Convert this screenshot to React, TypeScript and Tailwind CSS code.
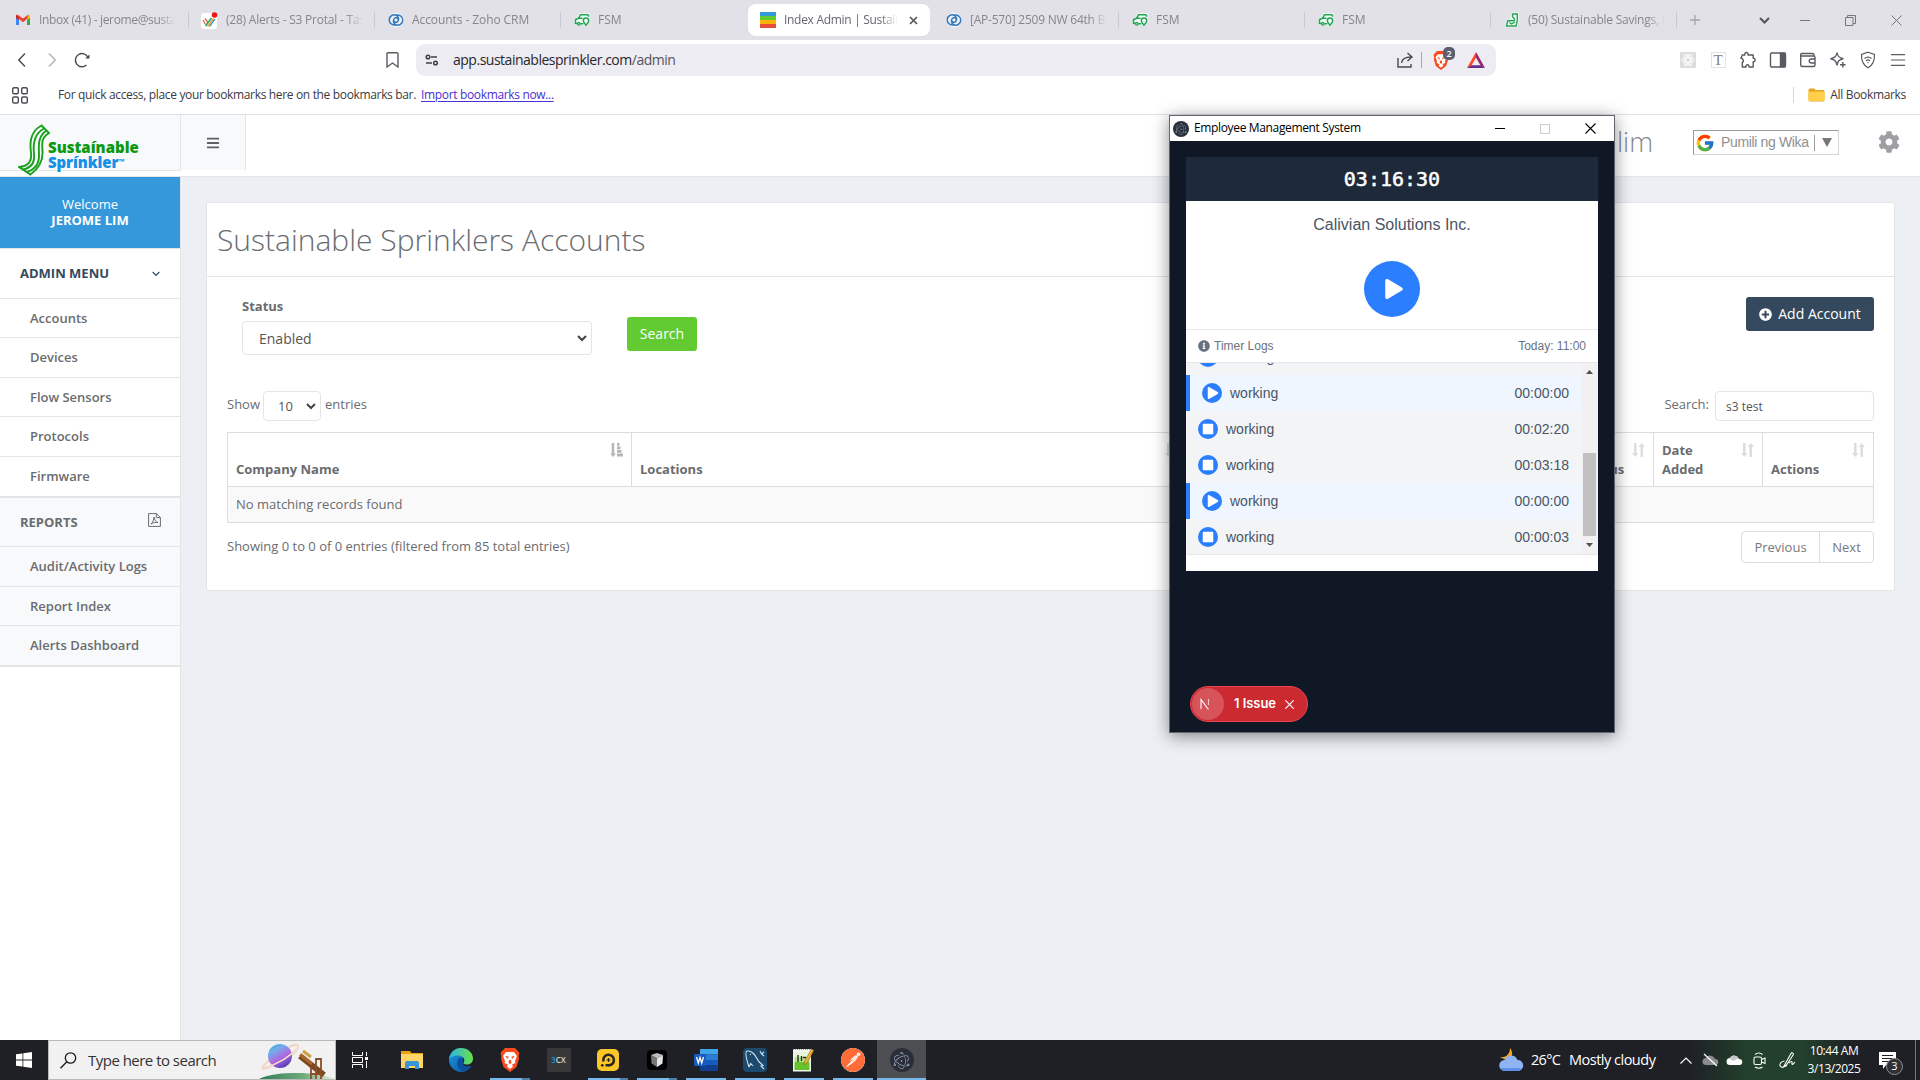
import React from "react";
import { FaBars, FaCog, FaPlusCircle, FaInfoCircle, FaPlay, FaStop } from "react-icons/fa";
import { FcGoogle } from "react-icons/fc";
import { SiPostman, SiElectron } from "react-icons/si";

const GmailIcon = () => (
  <svg width="16" height="16" viewBox="0 0 16 16">
    <path d="M1 4v9h3V7z" fill="#4285f4" />
    <path d="M15 4v9h-3V7z" fill="#34a853" />
    <path d="M12 4.500 15 2.500v3.500L12 8z" fill="#fbbc04" />
    <path d="M1 2.500 4 4.500V8L1 6z" fill="#c5221f" />
    <path d="M2.500 2.500 8 6.500l5.500-4L12 7 8 10.300 4 7z" fill="#ea4335" />
  </svg>
);
const AlertsIcon = () => (
  <svg width="17" height="17" viewBox="0 0 17 17">
    <rect y="1" width="16" height="16" rx="3" fill="#fff" />
    <path d="M2 8l2.500 4.500M4 6.500l3 4" stroke="#e5684d" strokeWidth="1.300" />
    <path d="M4.500 14 10.500 6" stroke="#27a567" strokeWidth="1.500" />
    <path d="M6.500 14.500 12.500 6.500" stroke="#f0a030" strokeWidth="1.300" />
    <path d="M8.500 14.500 14 7" stroke="#3c9bb9" strokeWidth="1.300" />
    <circle cx="13.500" cy="3" r="2.800" fill="#f01414" />
  </svg>
);
const ZohoIcon = () => (
  <svg width="16" height="16" viewBox="0 0 16 16" fill="none" stroke="#3478b9" strokeWidth="1.500">
    <circle cx="8" cy="8" r="7.500" fill="#eef3f8" stroke="none" />
    <path d="M8.500 12.300A5 5 0 1 1 8.700 3.500c2.200 1.800 2.500 4.500.8 6.200-1.300 1.300-3.800.5-3.800-1.500" />
    <path d="M7.500 3.700a5 5 0 1 1-.2 8.800C5.100 10.700 4.800 8 6.500 6.300c1.300-1.300 3.800-.5 3.800 1.500" />
  </svg>
);
const FsmIcon = () => (
  <svg width="16" height="16" viewBox="0 0 16 16" fill="none">
    <g id="fsm">
      <path d="M14.800 2.500H6.300L4.300 6.200 1.500 7.500v4h7.500l3.500 1.500 2-5z" fill="#f4faf6" stroke="#f4faf6" strokeWidth="2.500" />
      <path d="M14.500 2.700H6.500L4.500 6.300 1.500 7.500v4h1.800M6.300 11.700h3M4.700 6.300h3.800" stroke="#23a455" strokeWidth="1.600" />
      <circle cx="4.800" cy="11.800" r="1.300" stroke="#23a455" strokeWidth="1.300" />
      <path d="M14.500 2.700v2M12 13.300c-1.700-2-2.700-3.300-2.700-4.600a2.700 2.700 0 0 1 5.400 0c0 1.300-1 2.600-2.700 4.600z" stroke="#23a455" strokeWidth="1.500" />
    </g>
  </svg>
);
const SavingsIcon = () => (
  <svg width="16" height="16" viewBox="0 0 16 16" fill="none">
    <path d="M8 1.800h5.500V9l-1.300 5H2.500l1-5 4-1z" fill="#f4faf6" stroke="#f4faf6" strokeWidth="2.500" />
    <path d="M8.500 5V2h4.800v6.500L12 14H2.500l1.200-5.200H6M8.500 5l1.800 1.500c.8 1.300-.2 2.500-1.600 2.300L6 8.500M5.500 10.500l2 1.500 3.500-2" stroke="#23a455" strokeWidth="1.400" />
  </svg>
);
const IndexIcon = () => (
  <div className="flex h-4 w-4 flex-col">
    <i className="h-1 bg-[#3498db]" />
    <i className="h-1 bg-[#62cb31]" />
    <i className="h-1 bg-[#ffb606]" />
    <i className="h-1 bg-[#e74c3c]" />
  </div>
);

const tabs = [
  { icon: <GmailIcon />, t: "Inbox (41) - jerome@sustainable", c: "tracking-[-0.35px]" },
  { icon: <AlertsIcon />, t: "(28) Alerts - S3 Protal - Task list", c: "tracking-[-0.22px]" },
  { icon: <ZohoIcon />, t: "Accounts - Zoho CRM", c: "tracking-[-0.08px]" },
  { icon: <FsmIcon />, t: "FSM", last: true, c: "" },
  { icon: <IndexIcon />, t: "Index Admin | Sustainable", active: true, c: "tracking-[-0.3px]" },
  { icon: <ZohoIcon />, t: "[AP-570] 2509 NW 64th Boca", c: "tracking-[-0.22px]" },
  { icon: <FsmIcon />, t: "FSM", c: "" },
  { icon: <FsmIcon />, t: "FSM", c: "" },
  { icon: <SavingsIcon />, t: "(50) Sustainable Savings, LLC", c: "tracking-[-0.24px]" },
];

function TabStrip() {
  return (
    <div className="flex h-10 items-center bg-[#e2e1e7] pl-[3px] text-xs text-[#86858d]">
      {tabs.map((tab, i) =>
        tab.active ? (
          <div key={i} className="mr-[3px] ml-px flex h-8 w-[182px] shrink-0 items-center rounded-lg bg-white pl-3 text-[#68676f]">
            {tab.icon}
            <span className={"ml-2 w-[114px] overflow-hidden whitespace-nowrap [mask-image:linear-gradient(to_right,#000_85%,transparent)] " + tab.c}>{tab.t}</span>
            <svg className="ml-[11px]" width="9" height="9" viewBox="0 0 9 9" stroke="#55545b" strokeWidth="1.700"><path d="M1 1l7 7M8 1 1 8" /></svg>
          </div>
        ) : (
          <div key={i} className={"flex h-8 w-[186px] shrink-0 items-center " + (i > 1 ? "pl-[13px]" : "pl-3")}>
            {tab.icon}
            <span className={"ml-2 w-[137px] overflow-hidden whitespace-nowrap [mask-image:linear-gradient(to_right,#000_87%,transparent)] " + tab.c}>{tab.t}</span>
            {!tab.last && <i className="ml-auto h-4 w-px bg-[#c9c8cf]" />}
          </div>
        )
      )}
      <svg className="ml-[13px]" width="10" height="10" viewBox="0 0 10 10" stroke="#a3a2aa" strokeWidth="1.300"><path d="M5 0v10M0 5h10" /></svg>
      <div className="ml-auto flex text-[#77767e]">
        <div className="flex w-[45px] justify-center"><svg width="11" height="11" viewBox="0 0 11 11" fill="none" stroke="#55545b" strokeWidth="2"><path d="M1 3l4.500 4.500L10 3" /></svg></div>
        <div className="flex w-[35px] items-center justify-center"><i className="h-px w-2.5 bg-[#77767e]" /></div>
        <div className="flex w-[57px] justify-center"><svg width="11" height="11" viewBox="0 0 11 11" fill="none" stroke="currentColor"><path d="M.5 2.500h7.500v8H.5zM2.500 2.500v-2h8v8H8" /></svg></div>
        <div className="flex w-[35px] justify-center"><svg width="11" height="11" viewBox="0 0 11 11" fill="none" stroke="currentColor"><path d="M.5.5l10 10M10.500.5l-10 10" /></svg></div>
        <i className="w-[6px]" />
      </div>
    </div>
  );
}

const Svg = ({ children, s = 18 }: { children: React.ReactNode; s?: number }) => (
  <svg width={s} height={s} viewBox="0 0 18 18" fill="none" stroke="#5b5a62" strokeWidth="1.400">{children}</svg>
);

const Lion = ({ w, h }: { w: number; h: number }) => (
  <svg width={w} height={h} viewBox="0 0 20 24">
    <path d="M5 0h10l2.500 2.500L19.500 5l-.8 3 .3 3-2.500 8L10 24l-6.500-5L1 11l.3-3L.5 5l2-2.500z" fill="#fb4a1e" />
    <path d="M6 4h8l3 4-2 5 .5 2-3.500 1.500 1 2-3 2.500-3-2.500 1-2L4.500 15l.5-2-2-5z" fill="#fff" />
    <path d="M5 8l3.500.5L8 11zM15 8l-3.500.5L12 11zM9 12h2l.5 3-1.500 1-1.500-1z" fill="#fb4a1e" />
  </svg>
);

function Toolbar() {
  const ext = [
    <svg width="16" height="16" viewBox="0 0 16 16" fill="none" stroke="#fff"><rect width="16" height="16" fill="#dcdcde" stroke="none" /><ellipse cx="8" cy="8" rx="6" ry="2.400" /><ellipse cx="8" cy="8" rx="6" ry="2.400" transform="rotate(60 8 8)" /><ellipse cx="8" cy="8" rx="6" ry="2.400" transform="rotate(120 8 8)" /></svg>,
    <span className="flex h-4 w-[15px] items-center justify-center border border-[#e3e3e5] font-['Liberation_Serif',serif] text-[15px] leading-none text-[#7f7f84]">T</span>,
    <svg width="18" height="18" viewBox="0 0 18 18" fill="none" stroke="#5b5a62" strokeWidth="1.400"><path d="M3.300 4h2.500C5 .7 9.800.7 9 4h5.200v3.300c2.500-.6 2.500 4 0 3.400V16H10c.6-3-3.600-3-3 0H3.300v-4.500c2.500-1.500 0-4.500-1.300-4.200z" strokeLinejoin="round" /></svg>,
    <Svg><rect x="1.500" y="2" width="15" height="14" rx="1.200" /><path d="M11.500 2.500H16v13h-4.500z" fill="#5b5a62" /></Svg>,
    <Svg><path d="M15 5.500V4c0-1-.6-1.500-1.500-1.500h-11C1.500 2.500 1.500 5 2.500 5h12c1 0 1.500.6 1.500 1.500V14c0 1-.6 1.500-1.500 1.500h-11C2.500 15.500 1.700 15 1.700 14V3.500M16 8h-3.500C9.500 8 9.500 12 12.500 12H16" /></Svg>,
    <Svg><path d="M8 1.500c.6 4 2 5.500 6.300 6.300C10 8.700 8.600 10 8 14.500 7.300 10 6 8.700 1.500 7.800 6 7 7.300 5.500 8 1.500zM13.800 11v5.500M11 13.800h5.600" /></Svg>,
    <Svg><path d="M9 1.200 15.500 3.500c.3 6-1.500 10.500-6.500 13.300C4 14 2.200 9.500 2.500 3.500zM5.500 7.500c2-1.700 5-1.700 7 0M7 9.700c1.200-1 2.800-1 4 0M8.500 11.700h1" strokeWidth="1.200" /></Svg>,
    <Svg s={16}><path d="M1 3h16M1 9h16M1 15h16" /></Svg>,
  ];
  return (
    <div className="flex h-10 items-center bg-white">
      <svg className="ml-[18px]" width="8" height="14" viewBox="0 0 8 14" fill="none" stroke="#4b4a52" strokeWidth="1.400"><path d="M7 .5.8 7 7 13.500" /></svg>
      <svg className="ml-[22px]" width="8" height="14" viewBox="0 0 8 14" fill="none" stroke="#b5b4ba" strokeWidth="1.400"><path d="M1 .5 7.200 7 1 13.500" /></svg>
      <svg className="ml-[18px]" width="17" height="16" viewBox="0 0 17 16" fill="none" stroke="#4b4a52" strokeWidth="1.400"><path d="M12.500 13A6.600 6.600 0 1 1 14 5.500" /><path d="M15.500 2.500v4h-4.300z" fill="#4b4a52" stroke="none" /></svg>
      <svg className="ml-[295px]" width="13" height="16" viewBox="0 0 13 16" fill="none" stroke="#5b5a62" strokeWidth="1.400"><path d="M1 2q0-1.200 1.200-1.200h8.600Q12 .8 12 2v13l-5.500-4L1 15z" /></svg>
      <div className="ml-[17px] flex h-8 w-[1080px] items-center rounded-[9px] bg-[#edecf2]">
        <svg className="ml-[9px]" width="14" height="12" viewBox="0 0 14 12" fill="none" stroke="#3f3e46" strokeWidth="1.500"><circle cx="3" cy="3" r="1.800" /><path d="M6 3h6M1 9h6" /><circle cx="10.500" cy="9" r="1.800" /></svg>
        <span className="mb-px ml-[14px] text-[14px] tracking-[-0.49px] text-[#28272e]">app.sustainablesprinkler.com<span className="text-[#55545b]">/admin</span></span>
        <svg className="ml-auto" width="17" height="16" viewBox="0 0 17 16" fill="none" stroke="#4b4a52" strokeWidth="1.400"><path d="M1 6v9h13v-3M4.500 11c.5-4 3-6 9.500-6M10.500 1l4.500 4-4.500 4" /></svg>
        <i className="ml-[7px] h-4 w-px bg-[#aaa9b0]" />
        <div className="relative ml-[11px] flex h-5 w-4 items-center">
          <Lion w={16} h={19} />
          <span className="absolute -top-[3px] left-[10px] flex h-[13px] w-3 items-center justify-center rounded-[5px] bg-[#5b5e70] text-[9px] font-semibold text-white">2</span>
        </div>
        <svg className="mr-[11px] ml-[18px]" width="18" height="16" viewBox="0 0 18 16"><path d="M9 0 0 16l4.500-2.500L9 5.500z" fill="#ff4724" /><path d="M9 0l9 16-4.500-2.500L9 5.500z" fill="#9e1f63" /><path d="M0 16h18l-4.500-2.700h-9z" fill="#662d91" /></svg>
      </div>
      <div className="ml-auto flex pr-[7px]">
        {ext.map((e, i) => <div key={i} className="flex w-[30px] items-center justify-center">{e}</div>)}
      </div>
    </div>
  );
}

function BookmarksBar() {
  return (
    <div className="flex h-[35px] items-center border-b border-[#dfe0e4] bg-white pb-1 text-xs text-[#3b3a42]">
      <svg className="ml-3" width="16" height="17" viewBox="0 0 16 17" fill="none" stroke="#4b4a52" strokeWidth="1.400"><rect x=".7" y=".7" width="5.600" height="6" rx="1.300" /><rect x="9.700" y=".7" width="5.600" height="6" rx="1.300" /><rect x=".7" y="10" width="5.600" height="6" rx="1.300" /><rect x="9.700" y="10" width="5.600" height="6" rx="1.300" /></svg>
      <span className="ml-[30px] tracking-[-0.34px]">For quick access, place your bookmarks here on the bookmarks bar.</span>
      <span className="ml-[5px] tracking-[-0.34px] text-[#4a31d6] underline underline-offset-2">Import bookmarks now...</span>
      <i className="ml-auto h-4 w-px bg-[#d5d4da]" />
      <svg className="ml-[14px]" width="17" height="14" viewBox="0 0 17 14"><path d="M.5 2q0-1.500 1.500-1.500h4L7.500 2H15q1.500 0 1.500 1.500v8.500q0 1.500-1.500 1.500H2Q.5 13.500.5 12z" fill="#e3a51c" /><path d="M.5 4.500q0-1 1-1h14q1 0 1 1V12q0 1-1 1h-14q-1 0-1-1z" fill="#ffcf48" /></svg>
      <span className="mr-[14px] ml-[5px] tracking-[-0.33px]">All Bookmarks</span>
    </div>
  );
}

function Logo() {
  return (
    <div className="flex h-[62px] w-[180px] pl-[18px]">
      <svg className="mt-[9px] shrink-0" width="33" height="52" viewBox="0 0 33 52" fill="none" stroke="#18a01b" strokeWidth="1.900">
        <path d="M1 43c10-1 13-6 12-14S11 8 23.500 1.500L31 9c-8 5-7 10-6.500 18S23 43 12.500 50.500z" />
        <path d="M5 45.500c9-2 12-7 11-15.500S15.500 10 26 4.500M9 48c9-3 12.500-9 12-18S20 12 28.500 6.500" />
      </svg>
      <div className="mt-[25px] -ml-[3px] text-[15px] leading-[15px] font-extrabold">
        <div className="text-[#0b9a10]">Sustaínable</div>
        <div className="tracking-[-0.1px] text-[#168fe4]">Sprínkler<sup className="-top-1 text-[7px]">™</sup></div>
      </div>
    </div>
  );
}

function Sidebar() {
  const item = "flex items-center border-b border-[#e4e5e7] pl-[30px] font-semibold";
  return (
    <aside className="flex w-[181px] shrink-0 flex-col border-r border-[#e4e5e7] bg-white text-[13px] text-[#6a6c6f]">
      <div className="flex h-[71px] flex-col items-center justify-center bg-[#3498db] pb-px leading-4 text-white">
        <span>Welcome</span>
        <b>JEROME LIM</b>
      </div>
      <div className="flex h-[51px] items-center justify-between border-y border-[#e4e5e7] pr-5 pl-5 font-bold text-[#34495e]">
        ADMIN MENU
        <svg width="8" height="6" viewBox="0 0 8 6" fill="none" stroke="currentColor" strokeWidth="1.200"><path d="M.7 1 4 4.300 7.300 1" /></svg>
      </div>
      <div className={item + " h-[39px] pt-px"}>Accounts</div>
      <div className={item + " h-[40px]"}>Devices</div>
      <div className={item + " h-[39px] pt-px"}>Flow Sensors</div>
      <div className={item + " h-[40px]"}>Protocols</div>
      <div className={item + " h-[41px] border-b-2"}>Firmware</div>
      <div className="bg-[#f7f9fa]">
        <div className="flex h-[49px] items-center justify-between border-b border-[#e4e5e7] pt-0.5 pr-[19px] pl-5 font-bold">
          REPORTS
          <svg className="mb-[6px]" width="13" height="14" viewBox="0 0 13 14" fill="none" stroke="currentColor"><path d="M.6.6h7.900l3.900 3.900v8.900H.6zM8.300.6v4h4M3 11c1.500-1 3-4.500 3-7 .5 3 2 5 4 5.500-2-.5-5 .2-7 1.500z" /></svg>
        </div>
        <div className={item + " h-[40px]"}>Audit/Activity Logs</div>
        <div className={item + " h-[39px] pt-px"}>Report Index</div>
        <div className={item + " h-[41px] border-b-2"}>Alerts Dashboard</div>
      </div>
    </aside>
  );
}

const Chevron = () => (
  <svg width="10" height="7" viewBox="0 0 10 7" fill="none" stroke="#444" strokeWidth="2"><path d="M1 1l4 4 4-4" /></svg>
);
const SortIcon = () => (
  <svg width="13" height="14" viewBox="0 0 13 14" fill="#dcdddd"><path d="M2 0h2.500v10H6.500L3.200 14 0 10h2zM8.500 14H11V4h2L9.800 0 6.500 4h2z" /></svg>
);
const SortedIcon = () => (
  <svg width="13" height="14" viewBox="0 0 13 14" fill="#b5b6b7"><path d="M1.700 0h2.500v10.500H6L3 14 0 10.500h1.700zM7 0h2.500v2.800H7zM7 3.500h3.500v2.800H7zM7 7h4.500v2.800H7zM7 10.500h6v3H7z" /></svg>
);
function Th({ w, sorted, children }: { w: string; sorted?: boolean; children?: React.ReactNode }) {
  return (
    <div className={"flex items-end justify-between border-r border-[#ddd] pr-[8px] pb-[7px] pl-2 leading-[19px] " + w}>
      <span>{children}</span>
      <span className="mb-auto pt-[10px]">{sorted ? <SortedIcon /> : <SortIcon />}</span>
    </div>
  );
}

function Accounts() {
  return (
    <main className="flex-1 bg-[#eceff4] pt-[25px] pr-[25px] pl-[25px] text-[13px] text-[#6a6c6f]">
      <section className="h-[389px] rounded-xs border border-[#e4e5e7] bg-white">
        <h1 className="flex h-[74px] items-center border-b border-[#e4e5e7] pl-[10px] text-[30px] font-light">Sustainable Sprinklers Accounts</h1>
        <div className="flex h-[114px] items-start pr-5 pl-[35px]">
          <div className="pt-[19px]">
            <div className="leading-5 font-bold">Status</div>
            <div className="mt-[5px] flex h-[34px] w-[350px] items-center justify-between rounded border border-[#e4e5e7] pr-[4px] pl-4 text-[14px] text-[#555]">Enabled<Chevron /></div>
          </div>
          <div className="mt-10 ml-[35px] flex h-[34px] w-[70px] items-center justify-center rounded-[3px] bg-[#62cb31] pb-0.5 text-[14px] text-white">Search</div>
          <div className="mt-5 ml-auto flex h-[34px] w-32 items-center justify-center gap-1.5 rounded-[3px] bg-[#34495e] pb-0.5 text-[14px] text-white"><FaPlusCircle size={13} className="mt-0.5" />Add Account</div>
        </div>
        <div className="flex h-[30px] pr-[20px] pl-5">
          <span className="mt-1">Show</span>
          <div className="mr-1 ml-[3px] flex w-[58px] items-center justify-between rounded border border-[#e4e5e7] pt-px pr-[4px] pl-[14px] text-[#555]">10<Chevron /></div>
          <span className="mt-1">entries</span>
          <span className="mt-1 ml-auto">Search:</span>
          <div className="ml-[6px] flex w-[159px] items-center rounded border border-[#e4e5e7] pt-px pl-[10px] text-xs text-[#555]">s3 test</div>
        </div>
        <div className="mt-[11px] mr-5 ml-5 border border-r-0 border-[#ddd]">
          <div className="flex h-[54px] border-b border-[#ddd] font-bold">
            <Th w="w-[404px]" sorted>Company Name</Th>
            <Th w="w-[555px]">Locations</Th>
            <Th w="w-[380px]" />
            <Th w="w-[87px]"><span className="ml-2">Status</span></Th>
            <Th w="w-[109px]">Date<br />Added</Th>
            <Th w="flex-1">Actions</Th>
          </div>
          <div className="flex h-[35px] items-center border-r border-[#ddd] bg-[#f9f9f9] pl-2">No matching records found</div>
        </div>
        <div className="flex justify-between pr-5 pl-5">
          <span className="mt-[14px]">Showing 0 to 0 of 0 entries (filtered from 85 total entries)</span>
          <div className="mt-[8px] flex h-8 rounded border border-[#ddd] text-[#77797c]">
            <span className="flex w-[78px] items-center justify-center border-r border-[#ddd] pt-px">Previous</span>
            <span className="flex w-[53px] items-center justify-center pt-px">Next</span>
          </div>
        </div>
      </section>
    </main>
  );
}

const logs = [
  { play: false, t: "00:00:03" },
  { play: true, t: "00:00:00" },
  { play: false, t: "00:02:20" },
  { play: false, t: "00:03:18" },
  { play: true, t: "00:00:00" },
  { play: false, t: "00:00:03" },
];

function TimerWindow() {
  return (
    <div className="absolute top-[115px] left-[1169px] h-[618px] w-[446px] border border-[#62666e] bg-[#101725] font-['Liberation_Sans',sans-serif] shadow-[0_3px_16px_rgba(0,0,0,0.45)]">
      <div className="flex h-[25px] items-center bg-white pl-[3px] font-['Open_Sans',sans-serif] text-xs tracking-[-0.35px] text-black">
        <span className="flex h-4 w-4 items-center justify-center rounded-full bg-[#2b2e3b]"><SiElectron size={12} color="#9fcad6" /></span>
        <span className="mb-px ml-[5px]">Employee Management System</span>
        <i className="ml-auto h-px w-2.5 bg-black" />
        <i className="ml-[35px] h-2.5 w-2.5 border border-[#ccc]" />
        <svg className="mr-[18px] ml-[35px]" width="11" height="11" viewBox="0 0 11 11" stroke="#000" strokeWidth="1.100"><path d="M.5.5l10 10M10.500.5l-10 10" /></svg>
      </div>
      <div className="mx-4 mt-4 h-[414px] bg-white">
        <div className="flex h-11 items-center justify-center bg-[#1e2939] font-['DejaVu_Sans_Mono',monospace] text-[20px] text-white [-webkit-text-stroke:0.5px_#fff]">03:16:30</div>
        <div className="pt-3 text-center text-base text-[#4a5565]">Calivian Solutions Inc.</div>
        <div className="mx-auto mt-6 flex h-14 w-14 items-center justify-center rounded-full bg-[#2b7fff] pl-1"><FaPlay size={20} color="#fff" /></div>
        <div className="mt-3 flex h-[34px] items-center border-y border-[#e5e7eb] px-3 text-xs text-[#6a7282]">
          <FaInfoCircle size={12} /><span className="ml-1 text-[12px]">Timer Logs</span><span className="ml-auto">Today: 11:00</span>
        </div>
        <div className="flex h-[192px] border-b border-[#e5e7eb]">
          <div className="flex flex-1 flex-col justify-end overflow-hidden bg-[#f3f4f6] text-[14px] text-[#4a5565]">
            {logs.map((l, i) => (
              <div key={i} className={"flex h-9 shrink-0 items-center pr-3 pl-3 last:-mb-px " + (l.play ? "border-l-4 border-[#2b7fff] bg-[#eff6ff]" : "")}>
                <span className="flex h-5 w-5 items-center justify-center rounded-full bg-[#2b7fff]">
                  {l.play ? <FaPlay size={12} color="#fff" className="ml-0.5" /> : <FaStop size={12} color="#fff" />}
                </span>
                <span className="ml-2">working</span>
                <span className="ml-auto">{l.t}</span>
              </div>
            ))}
          </div>
          <div className="flex w-[17px] flex-col items-center bg-[#f1f1f1]">
            <svg className="mt-[7px]" width="7" height="4" viewBox="0 0 7 4" fill="#505050"><path d="M3.500 0 7 4H0z" /></svg>
            <i className="mt-[79px] h-[83px] w-[13px] bg-[#c1c1c1]" />
            <svg className="mt-[7px]" width="7" height="4" viewBox="0 0 7 4" fill="#505050"><path d="M3.500 4 7 0H0z" /></svg>
          </div>
        </div>
      </div>
      <div className="mt-[115px] ml-5 flex h-9 w-[118px] items-center rounded-full border border-[#e5484d] bg-[#ca2a30] pl-px text-white">
        <span className="flex h-8 w-8 items-center rounded-full bg-[#d6545a] pl-2">
          <svg width="10" height="12" viewBox="0 0 10 12" fill="none" stroke="#fff" strokeWidth="1.100"><path d="M1 11V1.500l7.500 10" /><path d="M8.500 1v6" opacity=".7" /></svg>
        </span>
        <span className="ml-[10px] font-['Inter',sans-serif] text-[13px] font-semibold tracking-[-0.05px]">1 Issue</span>
        <svg className="ml-[9px]" width="9" height="9" viewBox="0 0 9 9" stroke="#fff" strokeWidth="1.100"><path d="M.3.3l8.400 8.400M8.700.3.3 8.700" /></svg>
      </div>
    </div>
  );
}

const Explorer = () => (
  <svg width="22" height="18" viewBox="0 0 22 18"><path d="M0 0h9l1.500 2H22v15H0z" fill="#e8a317" /><path d="M0 3h22v14H0z" fill="#ffd568" /><path d="M4 18v-6q0-2 2-2h10q2 0 2 2v6h-4v-3H8v3z" fill="#3a95d8" /></svg>
);
const EdgeIcon = () => (
  <svg width="24" height="24" viewBox="0 0 24 24">
    <defs>
      <linearGradient id="eg1" x1="0" x2="1"><stop offset="0" stopColor="#29b6e8" /><stop offset="1" stopColor="#6be04a" /></linearGradient>
      <linearGradient id="eg2" x1="0" y1="0" x2="1" y2="1"><stop offset="0" stopColor="#1b9de2" /><stop offset="1" stopColor="#0c4f9e" /></linearGradient>
    </defs>
    <path d="M12 0a12 12 0 1 0 10.500 17.800c-2.500 1.200-6.500 1.200-8.500-1.300-1.500-2 .5-2.500 0-4.500z" fill="url(#eg2)" />
    <path d="M0 11C1 4.500 6 0 12 0c7 0 12 5 12 10.500 0 4-3 6-6 6-3.500 0-4-1.300-3.200-2.300C16.500 11.500 14 7.500 9.500 7.500 5 7.500 1.500 9 0 11z" fill="url(#eg1)" />
    <path d="M9 11.500c-3 6 1 11.500 7 11.700 2.800-1 5-2.700 6.500-5.400-3 1.700-7.500 1.200-8.800-1.500-.9-2 .8-2.500.3-4.300-1-2.500-4-2.500-5-.5z" fill="#0d4f9c" />
  </svg>
);
const Player = () => (
  <svg width="22" height="22" viewBox="0 0 22 22"><rect width="22" height="22" rx="5" fill="#fbc728" /><path d="M6.500 12.500a5.300 5.300 0 1 1 4.500 3.800H8.500" fill="none" stroke="#28261f" strokeWidth="2.600" /><path d="M11.500 9v4M9.500 11h4" stroke="#28261f" strokeWidth="1.200" /><circle cx="5.300" cy="16.300" r="1.400" fill="#28261f" /></svg>
);
const Cube = () => (
  <svg width="20" height="20" viewBox="0 0 20 20"><rect width="20" height="20" rx="4" fill="#000" /><path d="M4 5l6-2 6 2-6 3.500z" fill="#bbb" /><path d="M4 5l6 3.500V17l-5.500-3.500z" fill="#777" /><path d="M16 5l-6 3.500V17l5.500-3.500z" fill="#e5e5e5" /></svg>
);
const Word = () => (
  <svg width="24" height="22" viewBox="0 0 24 22"><path d="M6 0h18v5.500H6z" fill="#41a5ee" /><path d="M6 5.500h18V11H6z" fill="#2b7cd3" /><path d="M6 11h18v5.500H6z" fill="#185abd" /><path d="M6 16.500h18V22H6z" fill="#103f91" /><rect y="5" width="12" height="12" rx="1" fill="#185abd" /><path d="M2.500 8l1.800 6L6 8.500 7.700 14l1.800-6" fill="none" stroke="#fff" strokeWidth="1.300" /></svg>
);
const Notepad = () => (
  <svg width="23" height="24" viewBox="0 0 23 24"><path d="M1 1h18v22.500H1z" fill="#f3f6ee" /><path d="M2.500 14h15v8h-15z" fill="#63c52b" /><path d="M2.500 9h15v5h-15z" fill="#b4e68e" /><path d="M2.500 4h15v5h-15z" fill="#e6f5da" /><path d="M1 1.500h18" stroke="#999" strokeDasharray="1 1" /><path d="M6 7v7M9.500 8v5M11 9.500h3" stroke="#26331c" strokeWidth="1.400" /><path d="M12.500 13.500 19.500 1l2.300 1.300L15 15l-2.700 2z" fill="#eeb33b" stroke="#8c5d16" strokeWidth=".6" /></svg>
);
const TaskView = () => (
  <svg className="mr-[6px]" width="16" height="16" viewBox="0 0 16 16" fill="none" stroke="#fff"><path d="M.5 0v3.500h10V0M.5 16v-3.500h10V16M.5 5.500h10v5H.5zM14.500 0v4M14.500 9v7" /><path d="M13 5h3v3h-3z" fill="#fff" stroke="none" /></svg>
);

function Taskbar() {
  const apps = [
    { i: <TaskView /> },
    { i: <Explorer /> },
    { i: <EdgeIcon /> },
    { i: <Lion w={20} h={24} />, run: 2 },
    { i: <span className="flex h-6 w-6 items-center justify-center bg-[#383838] text-[8px] font-semibold text-[#d8d8d8]"><span className="text-[#1795d4]">3</span>CX</span> },
    { i: <Player />, run: 2 },
    { i: <Cube />, run: 2 },
    { i: <Word />, run: 1 },
    { i: <span className="flex h-6 w-6 items-center justify-center rounded-sm bg-[#1b4a6e]"><svg width="22" height="22" viewBox="0 0 22 22" fill="none" stroke="#d5e4ee" strokeWidth="1.100"><path d="M5 18C3 12 .5 3 3 2c3-.5 7 2 9 6 1.500 3.500 3 5.500 7 8.500l-2 .5 3 3M6 5l.8 1M5 18l1.700-3.500L9 17M16 2l1.500 3 2.500 2M20 3l-2.500 2" /></svg></span>, run: 1 },
    { i: <Notepad />, run: 1 },
    { i: <SiPostman size={24} color="#ff6c37" className="rounded-full bg-white" />, run: 1 },
    { i: <span className="flex h-6 w-6 items-center justify-center rounded-full bg-[#2c2d3b]"><SiElectron size={17} color="#b9d8e2" /></span>, run: 1, on: true },
  ];
  return (
    <div className="flex h-10 bg-[#1f2025] bg-[linear-gradient(90deg,transparent_88%,#22402b_91%,#22402b_94%,transparent_96.500%)] text-white">
      <div className="flex w-12 items-center justify-center">
        <svg width="16" height="16" viewBox="0 0 16 16" fill="#fff"><path d="M0 2.300 6.500 1.400v6.100H0zM7.300 1.300 16 0v7.500H7.300zM0 8.400h6.500v6.200L0 13.700zM7.300 8.400H16V16l-8.700-1.300z" /></svg>
      </div>
      <div className="flex w-72 items-center overflow-hidden border border-[#b9b9b9] bg-[#f1f1f1] pl-[11px]">
        <svg width="17" height="17" viewBox="0 0 17 17" fill="none" stroke="#1c1c1c" strokeWidth="1.300"><circle cx="10.500" cy="6" r="5.200" /><path d="M6.800 9.700.5 16.300" /></svg>
        <span className="ml-[11px] text-[15px] tracking-[-0.52px] text-[#333]">Type here to search</span>
        <svg className="ml-auto" width="76" height="38" viewBox="0 0 76 38">
          <defs>
            <linearGradient id="pl" x1="0" y1="0" x2=".6" y2="1"><stop offset="0" stopColor="#2a9bd6" /><stop offset=".3" stopColor="#6fb0ec" /><stop offset=".65" stopColor="#b06ae0" /><stop offset="1" stopColor="#5a3fb8" /></linearGradient>
            <linearGradient id="hl"><stop offset="0" stopColor="#2e7d5b" /><stop offset=".6" stopColor="#72ad7b" /><stop offset="1" stopColor="#e8f0dc" /></linearGradient>
          </defs>
          <path d="M0 38c10-5 24-6 38-6 15 0 28 2 38 6z" fill="url(#hl)" />
          <path d="M12 18C-4 31 4 29 20 22S44 2 36 4c-2 0-4 1-6 2" fill="none" stroke="#f0d3c0" strokeWidth="2" />
          <circle cx="21" cy="15" r="12" fill="url(#pl)" />
          <path d="M7 22c-6 5-3 6 8 1.500C28 18 43 6 38 4" fill="none" stroke="#f3dccb" strokeWidth="1.700" />
          <path d="M41 15l24 19" stroke="#7c461e" strokeWidth="6" /><path d="M41 13.500l12 9.500" stroke="#a8672f" strokeWidth="3" /><path d="M44 10l8 6" stroke="#caa043" strokeWidth="3" />
          <path d="M52 38V26M57 38V18h5v20M51 33h12" fill="none" stroke="#8a4f2a" strokeWidth="1.800" />
        </svg>
      </div>
      <div className="ml-[2px] flex">
        {apps.map((a, k) => (
          <div key={k} className={"relative flex h-10 w-[49px] items-center justify-center " + (a.on ? "bg-[#4d4e52]" : "")}>
            {a.i}
            {a.run && <span className={"absolute bottom-0 flex h-0.5 " + (a.on ? "w-full" : "w-10")}><i className="flex-1 bg-[#76b9ed]" />{a.run === 2 && <i className="w-2 bg-[#4f7fa6]" />}</span>}
          </div>
        ))}
      </div>
      <div className="ml-auto flex items-center text-[15px]">
        <svg width="25" height="24" viewBox="0 0 25 24"><path d="M11 0c4 5 2 10-2 11-3 1-6-.5-8-2 6 1 10-3 10-9z" fill="#f5a623" /><path d="M6 23a5.500 5.500 0 0 1-.5-11A7 7 0 0 1 18.500 12 5.500 5.500 0 0 1 19 23z" fill="#8fb4f4" /><path d="M6 23a5 5 0 0 1-4.500-3h21A5 5 0 0 1 19 23z" fill="#5d8fe6" /></svg>
        <span className="ml-[7px] w-[38px] tracking-[-0.7px] text-[14.500px]">26°C</span>
        <span className="w-[86px] text-[14.500px] tracking-[-0.5px] whitespace-nowrap">Mostly cloudy</span>
        <svg className="ml-[25px]" width="12" height="7" viewBox="0 0 12 7" fill="none" stroke="#fff" strokeWidth="1.200"><path d="M.5 6.500 6 1l5.500 5.500" /></svg>
        <svg className="ml-[10px]" width="17" height="14" viewBox="0 0 17 14"><path d="M4 12a3.500 3.500 0 0 1 0-7 5 5 0 0 1 9 1 3 3 0 0 1 .5 6z" fill="#8b8c8f" /><path d="M2 1l13 12" stroke="#fff" strokeWidth="1.200" /></svg>
        <svg className="ml-[7px]" width="17" height="12" viewBox="0 0 17 12"><path d="M4 11a3.500 3.500 0 0 1 0-7 5 5 0 0 1 9 1 3 3 0 0 1 .5 6z" fill="#fff" /><path d="M3.500 4.200a5 5 0 0 1 9 0L7 7z" fill="#c4c5c7" /></svg>
        <svg className="ml-[10px]" width="13" height="17" viewBox="0 0 13 17" fill="none" stroke="#fff" strokeWidth="1.100"><rect x="1" y="5" width="7.500" height="7.500" rx="1.500" /><path d="M8.500 7.500 12 6v5.500L8.500 10M2 2.500q4-3 7.500 0M2 15q4 2.500 7.500 0" /></svg>
        <svg className="ml-[13px]" width="17" height="17" viewBox="0 0 17 17" fill="none" stroke="#fff" strokeWidth="1.100"><path d="M5 14 12 1.500c1-1.500 3 0 2.200 1.300L7.500 13zM5 14q2 1 2.500-1M5.500 9C2 9.500.5 12 1 13.500s3 3 4.500.5M10 11c2-2 3.500-2 3 0s1 2 3-1" /></svg>
        <div className="ml-[9px] w-[58px] text-center text-xs leading-[18px] tracking-[-0.45px] whitespace-nowrap">10:44 AM<br />3/13/2025</div>
        <div className="relative ml-[16px] h-6 w-6 self-center">
          <svg width="17" height="17" viewBox="0 0 17 17" className="mt-1"><path d="M0 0h17v13H7l-3 4v-4H0z" fill="#fff" /><path d="M3 3.500h11M3 6.500h11M3 9.500h7" stroke="#1f2025" /></svg>
          <span className="absolute top-[10px] left-[7px] flex h-[17px] w-[17px] items-center justify-center rounded-full border border-[#909094] bg-[#303136] text-[11px]">3</span>
        </div>
        <i className="mr-1 ml-[12px] h-10 w-px bg-[#77787c]" />
      </div>
    </div>
  );
}

export default function App() {
  return (
    <div className="relative flex h-[1080px] w-[1920px] flex-col overflow-hidden bg-white font-['Open_Sans',sans-serif]">
      <TabStrip />
      <Toolbar />
      <BookmarksBar />
      <header className="flex h-[62px] border-b border-[#e4e5e7] bg-white">
        <div className="h-14 w-[181px] border-r border-b border-[#e4e5e7] bg-[#f7f9fa]"><Logo /></div>
        <div className="flex h-[55px] w-[65px] items-center justify-center border-r border-[#e4e5e7] bg-[#f7f9fa]"><FaBars size={14} color="#5f6164" /></div>
        <div className="ml-auto flex h-[55px] items-center">
          <span className="mr-[40px] mb-[3px] text-[27px] leading-none font-light text-[#85878a]">lim</span>
          <div className="flex h-[25px] w-[146px] items-center border border-[#d5d5d5] border-t-[#9b9b9b] border-l-[#9b9b9b] font-['Liberation_Sans',sans-serif] text-[14px] text-[#909090]">
            <FcGoogle size={20} className="ml-px shrink-0" />
            <span className="ml-[6px] tracking-[-0.35px] whitespace-nowrap">Pumili ng Wika</span>
            <i className="ml-[5px] h-4 w-px bg-[#9b9b9b]" />
            <svg className="ml-[7px] shrink-0" width="10" height="9" viewBox="0 0 10 9" fill="#767676"><path d="M0 0h10L5 9z" /></svg>
          </div>
          <FaCog size={22} color="#9d9fa2" className="mr-5 mb-0.5 ml-[39px]" />
        </div>
      </header>
      <div className="flex min-h-0 flex-1">
        <Sidebar />
        <Accounts />
      </div>
      <Taskbar />
      <TimerWindow />
    </div>
  );
}
